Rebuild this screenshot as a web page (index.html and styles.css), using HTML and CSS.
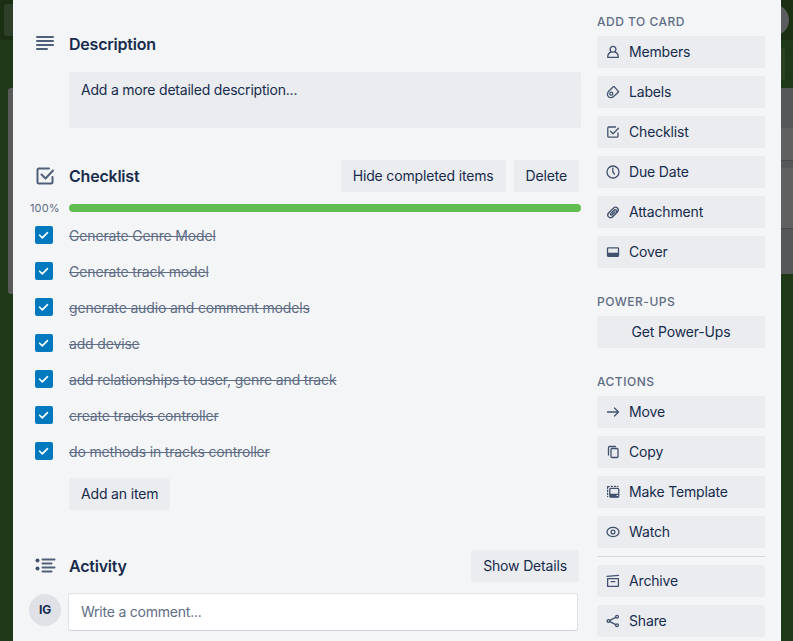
FILE: index.html
```html
<!DOCTYPE html>
<html lang="en">
<head>
<meta charset="utf-8">
<title>Card</title>
<link rel="stylesheet" href="styles.css">
</head>
<body>
<div class="board">
  <div class="board-header"><span class="header-button"></span><span class="header-avatar"></span></div>
  <div class="board-bar"><span class="bar-button"></span></div>
  <div class="lists">
    <div class="list"></div>
    <div class="list list-right"><div class="tile first"></div><div class="tile second"></div></div>
  </div>
</div>
<div class="dialog">
  <main class="main">
    <section class="description">
      <header class="head">
        <svg class="head-icon" viewBox="0 0 24 24"><path d="M4 5h16M4 9h16M4 13h16M4 17h10"/></svg>
        <h3>Description</h3>
      </header>
      <div class="description-box">Add a more detailed description...</div>
    </section>
    <section class="checklist">
      <header class="head">
        <svg class="head-icon" viewBox="0 0 24 24"><path d="M16 4.500H6A1.500 1.500 0 0 0 4.500 6v12A1.500 1.500 0 0 0 6 19.500h12a1.500 1.500 0 0 0 1.500-1.500v-5M8.500 10.500l4 4 7.500-8"/></svg>
        <h3>Checklist</h3>
        <button class="button">Hide completed items</button>
        <button class="button">Delete</button>
      </header>
      <div class="progress"><span class="percent">100%</span><div class="bar"></div></div>
      <ul class="items">
        <li><span class="check"><svg viewBox="0 0 18 18"><path d="M4.600 9.200l2.700 2.700 5.200-5.300"/></svg></span><s>Generate Genre Model</s></li>
        <li><span class="check"><svg viewBox="0 0 18 18"><path d="M4.600 9.200l2.700 2.700 5.200-5.300"/></svg></span><s>Generate track model</s></li>
        <li><span class="check"><svg viewBox="0 0 18 18"><path d="M4.600 9.200l2.700 2.700 5.200-5.300"/></svg></span><s>generate audio and comment models</s></li>
        <li><span class="check"><svg viewBox="0 0 18 18"><path d="M4.600 9.200l2.700 2.700 5.200-5.300"/></svg></span><s>add devise</s></li>
        <li><span class="check"><svg viewBox="0 0 18 18"><path d="M4.600 9.200l2.700 2.700 5.200-5.300"/></svg></span><s>add relationships to user, genre and track</s></li>
        <li><span class="check"><svg viewBox="0 0 18 18"><path d="M4.600 9.200l2.700 2.700 5.200-5.300"/></svg></span><s>create tracks controller</s></li>
        <li><span class="check"><svg viewBox="0 0 18 18"><path d="M4.600 9.200l2.700 2.700 5.200-5.300"/></svg></span><s>do methods in tracks controller</s></li>
      </ul>
      <button class="button add">Add an item</button>
    </section>
    <section class="activity">
      <header class="head">
        <svg class="head-icon wide" viewBox="0 0 24 24"><path d="M9.500 5.500h12M9.500 9.500h9M9.500 13.500h12M9.500 17.500h9"/><circle cx="4.500" cy="6.500" r="2"/><circle cx="4.500" cy="14.500" r="2"/></svg>
        <h3>Activity</h3>
        <button class="button">Show Details</button>
      </header>
      <div class="comment"><span class="avatar">IG</span><div class="comment-box">Write a comment...</div></div>
    </section>
  </main>
  <aside class="side">
    <section class="group">
      <h4>ADD TO CARD</h4>
      <button class="action"><svg viewBox="0 0 16 16"><circle cx="8" cy="5.300" r="2.900"/><path d="M5.800 8.200C3.700 9 2.700 10.800 2.700 13.300h10.600c0-2.500-1-4.300-3.100-5.100"/></svg>Members</button>
      <button class="action"><svg viewBox="0 0 16 16"><path d="M8.300 2.700 3.200 7.800c-.7 1.200-1 2.600-.4 3.900.6 1.300 1.600 1.900 3 1.900 1 0 2-.3 2.800-1.100l5.100-4.700-4-4.700a1 1 0 0 0-1.400-.4z"/><circle cx="6.300" cy="9.700" r="1.500"/></svg>Labels</button>
      <button class="action"><svg viewBox="0 0 16 16"><path d="M10.500 3H3.800a1 1 0 0 0-1 1v8.200a1 1 0 0 0 1 1H12a1 1 0 0 0 1-1V9M5.500 7.200 8 9.700l5.500-5.500"/></svg>Checklist</button>
      <button class="action"><svg viewBox="0 0 16 16"><circle cx="8" cy="8" r="6"/><path d="M7.800 4.200V8l1.600 2"/></svg>Due Date</button>
      <button class="action"><svg viewBox="0 0 16 16"><path d="M7.500 13 12.400 8c2.600-3-1.300-6.400-4-3.800L3.800 8.800c-3 3.200.9 6.300 3.400 4.100l4-4.100c1.800-2-.7-3.900-2.200-2.500L5.700 9.600c-.8 1 .3 1.900 1.100 1.100l3-3"/></svg>Attachment</button>
      <button class="action"><svg viewBox="0 0 16 16"><rect x="2.500" y="3.800" width="11" height="8.500" rx=".8"/><path class="solid" d="M2.500 8.700h11v3.600h-11z"/></svg>Cover</button>
    </section>
    <section class="group">
      <h4>POWER-UPS</h4>
      <button class="action centered">Get Power-Ups</button>
    </section>
    <section class="group">
      <h4>ACTIONS</h4>
      <button class="action"><svg viewBox="0 0 16 16"><path d="M2.500 8h11M9.500 4l4 4-4 4"/></svg>Move</button>
      <button class="action"><svg viewBox="0 0 16 16"><rect x="6" y="4.500" width="7" height="9" rx="1"/><path d="M10.500 2.500h-6a1 1 0 0 0-1 1v7.500"/></svg>Copy</button>
      <button class="action"><svg viewBox="0 0 16 16"><rect x="4.800" y="4.300" width="8.900" height="8.900" rx="1"/><path class="solid" d="M5 9.800h8.500v1.200h-2v1h2v1.200H5z"/><path d="M2.600 12.500v.1M2.600 10.400V9.300M2.600 7.500V6.200M2.600 4.300v-1.700h1.600M6.300 2.400h1.200M9.600 2.400h1.200M12.800 2.400h.2"/></svg>Make Template</button>
      <button class="action"><svg viewBox="0 0 16 16"><ellipse cx="8" cy="8" rx="6" ry="4.600"/><circle cx="8" cy="8" r="1.900"/></svg>Watch</button>
    </section>
    <hr>
    <section class="group">
      <button class="action"><svg viewBox="0 0 16 16"><path d="M2 3.300 13.500 2.300M2.600 5.700h10.800v7.600H2.600zM6.200 8.700h3.600"/></svg>Archive</button>
      <button class="action"><svg viewBox="0 0 16 16"><circle cx="3.500" cy="8" r="1.400"/><circle cx="12" cy="3.800" r="1.400"/><circle cx="12" cy="12.200" r="1.400"/><path d="m4.900 7.300 5.800-2.900M4.900 8.700l5.800 2.900"/></svg>Share</button>
    </section>
  </aside>
</div>
</body>
</html>
```
FILE: styles.css
```css
* { box-sizing: border-box; }
body {
  margin: 0;
  height: 641px;
  overflow: hidden;
  background: #1f3815;
  color: #172b4d;
  font: 14px/20px Inter, "Liberation Sans", sans-serif;
  letter-spacing: -.16px;
}
.board { position: absolute; inset: 0; overflow: hidden; }
.board-header {
  display: flex;
  justify-content: space-between;
  height: 40px;
  padding: 4px;
  background: #1b2f13;
}
.header-button { width: 32px; height: 32px; border-radius: 3px; background: #2e3e28; }
.header-avatar { width: 32px; height: 32px; border-radius: 50%; background: #5c5d5e; }
.board-bar { display: flex; justify-content: flex-end; height: 48px; padding: 8px; }
.bar-button { width: 90px; height: 32px; border-radius: 3px; background: #2a4221; }
.lists { display: flex; justify-content: space-between; align-items: flex-start; padding-left: 8px; }
.list { width: 272px; height: 206px; border-radius: 3px; background: #5b5a5b; }
.list-right { height: 186px; padding-top: 40px; border-radius: 0; background: #565759; }
.tile { background: #606060; border-bottom: 1px solid #48494d; }
.first { height: 33px; }
.second { height: 61px; margin-top: 7px; }

.dialog {
  position: relative;
  display: flex;
  gap: 16px;
  width: 768px;
  height: 641px;
  margin-left: 13px;
  padding: 0 16px;
  background: #f4f5f7;
}
.main { width: 552px; padding-top: 28px; }
.head { display: flex; align-items: center; height: 32px; padding-right: 2px; gap: 8px; }
.head-icon {
  width: 24px;
  height: 24px;
  margin: 0 4.5px 0 3.5px;
  fill: none;
  stroke: #505f79;
  stroke-width: 2;
  stroke-linecap: round;
  stroke-linejoin: round;
}
.wide circle { fill: #42526e; stroke: none; }
h3 { flex: 1; margin: 0; font-size: 16px; font-weight: 600; line-height: 20px; letter-spacing: -.22px; }
button { margin: 0; border: 0; color: inherit; font: inherit; letter-spacing: inherit; }
.button { height: 32px; padding: 6px 12px; border-radius: 3px; background: #eaecef; white-space: nowrap; }
.description-box {
  height: 56px;
  margin: 12px 0 0 40px;
  padding: 8px 12px;
  border-radius: 3px;
  background: #eaecef;
  letter-spacing: -.21px;
}
.checklist { margin-top: 32px; }
.progress { display: flex; align-items: center; height: 16px; margin-top: 8px; }
.percent { width: 40px; padding-left: 1px; color: #5e6c84; font-size: 11px; line-height: 10px; letter-spacing: .15px; }
.bar { flex: 1; height: 8px; border-radius: 4px; background: #61bd4f; }
.items { margin: 2px 0 0; padding: 0; list-style: none; }
.items li { display: flex; gap: 16px; height: 36px; padding: 8px 0 8px 6px; }
.check { width: 18px; height: 18px; border-radius: 2px; background: #0079bf; }
.check svg { display: block; fill: none; stroke: #fff; stroke-width: 1.6; stroke-linecap: round; stroke-linejoin: round; }
s { color: #5e6c84; }
.add { display: block; margin: 8px 0 0 40px; }
.activity { margin-top: 40px; }
.comment { display: flex; gap: 7px; margin-top: 11px; }
.avatar {
  width: 32px;
  height: 32px;
  margin-top: 1px;
  border-radius: 50%;
  background: #dfe1e6;
  font-size: 12px;
  font-weight: 700;
  line-height: 32px;
  text-align: center;
}
.comment-box {
  width: 510px;
  height: 38px;
  padding: 8px 12px;
  border: 1px solid #dfe1e6;
  border-bottom-color: #cfd4de;
  border-radius: 3px;
  background: #fff;
  color: #5e6c84;
  letter-spacing: -.22px;
}
.side { width: 168px; padding-top: 12px; }
.group { display: flex; flex-direction: column; gap: 8px; margin-bottom: 24px; }
h4 { margin: 0 0 -4px; color: #5e6c84; font-size: 12px; font-weight: 500; line-height: 20px; letter-spacing: .5px; }
.action {
  display: flex;
  align-items: center;
  gap: 8px;
  height: 32px;
  padding: 0 8px;
  border-radius: 3px;
  background: #eaecef;
  text-align: left;
}
.action svg { width: 16px; height: 16px; margin-left: -.5px; margin-right: .5px; fill: none; stroke: #42526e; stroke-width: 1.3; stroke-linecap: round; stroke-linejoin: round; }
.action .solid { fill: #42526e; stroke: none; }
.centered { justify-content: center; }
hr { height: 1px; margin: -16px 0 8px; border: 0; background: #d5d8de; }
```
